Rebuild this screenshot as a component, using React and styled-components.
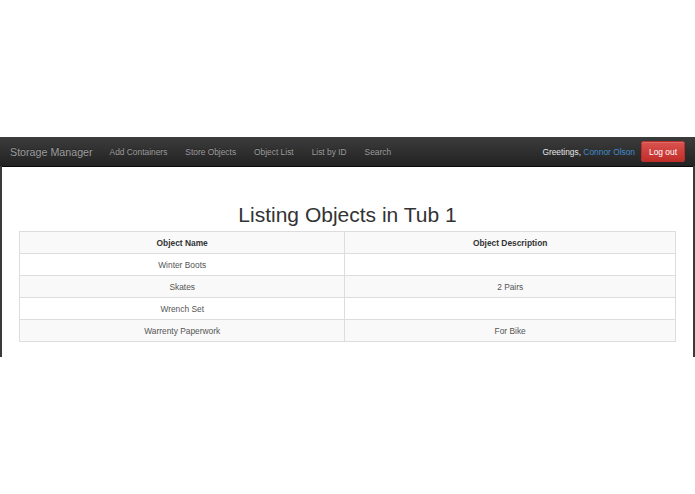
import React from 'react';
import styled, { createGlobalStyle } from 'styled-components';

const GlobalStyle = createGlobalStyle`
  html, body {
    margin: 0;
    padding: 0;
    background: #fff;
    font-family: "Liberation Sans", Arial, sans-serif;
  }
`;

const S = {};

S.Page = styled.div`
  width: 695px;
  height: 494px;
  padding-top: 137px;
  box-sizing: border-box;
  background: #fff;
`;

S.Navbar = styled.nav`
  display: flex;
  align-items: center;
  height: 30px;
  padding: 0 10px;
  background-image: linear-gradient(to bottom, #3c3c3c 0%, #222 100%);
  border-bottom: 1px solid #080808;
  box-sizing: border-box;
`;

S.Brand = styled.a`
  color: #9d9d9d;
  font-size: 10.7px;
  padding-right: 9px;
  text-shadow: 0 -1px 0 rgba(0,0,0,0.25);
`;

S.NavLinks = styled.ul`
  display: flex;
  list-style: none;
  margin: 0;
  padding: 0;
  flex: 1;
`;

S.NavLink = styled.li`
  color: #9d9d9d;
  font-size: 8.4px;
  padding: 0 9px;
  text-shadow: 0 -1px 0 rgba(0,0,0,0.25);

  &:first-child {
    padding-left: 8px;
  }
`;

S.Greeting = styled.span`
  color: #e6e6e6;
  font-size: 8.4px;
  margin-right: 6px;

  a {
    color: #428bca;
  }
`;

S.LogoutButton = styled.button`
  font-family: inherit;
  font-size: 8.4px;
  color: #fff;
  height: 21px;
  padding: 0 7px;
  border: 1px solid #b92c28;
  border-radius: 2.4px;
  background-image: linear-gradient(to bottom, #d9534f 0%, #c12e2a 100%);
  box-shadow: inset 0 1px 0 rgba(255,255,255,0.15);
`;

S.Content = styled.div`
  height: 191px;
  border-left: 2px solid #3a3a3a;
  border-right: 2px solid #3a3a3a;
  padding: 37px 17px 0;
  box-sizing: border-box;
  margin-top: -1px;
`;

S.Heading = styled.h1`
  margin: 0 0 4px;
  font-size: 21px;
  font-weight: 400;
  line-height: 24px;
  color: #333;
  text-align: center;
`;

S.Table = styled.table`
  width: 100%;
  border-collapse: collapse;
  font-size: 8.4px;
  color: #555;

  td {
    border: 1px solid #ddd;
    padding: 0 5px;
    height: 21px;
    line-height: 12px;
    text-align: center;
  }

  td:first-child {
    width: 49.6%;
  }

  tr:nth-of-type(odd) {
    background: #f9f9f9;
  }
`;

S.HeaderCell = styled.td`
  && {
    font-weight: 700;
    color: #333;
  }
`;

const objects = [
  { name: 'Winter Boots', description: '' },
  { name: 'Skates', description: '2 Pairs' },
  { name: 'Wrench Set', description: '' },
  { name: 'Warrenty Paperwork', description: 'For Bike' },
];

export default function App() {
  return (
    <S.Page>
      <GlobalStyle />
      <S.Navbar>
        <S.Brand>Storage Manager</S.Brand>
        <S.NavLinks>
          <S.NavLink>Add Containers</S.NavLink>
          <S.NavLink>Store Objects</S.NavLink>
          <S.NavLink>Object List</S.NavLink>
          <S.NavLink>List by ID</S.NavLink>
          <S.NavLink>Search</S.NavLink>
        </S.NavLinks>
        <S.Greeting>Greetings, <a>Connor Olson</a></S.Greeting>
        <S.LogoutButton>Log out</S.LogoutButton>
      </S.Navbar>
      <S.Content>
        <S.Heading>Listing Objects in Tub 1</S.Heading>
        <S.Table>
          <tbody>
            <tr>
              <S.HeaderCell>Object Name</S.HeaderCell>
              <S.HeaderCell>Object Description</S.HeaderCell>
            </tr>
            {objects.map(o => (
              <tr key={o.name}>
                <td>{o.name}</td>
                <td>{o.description}</td>
              </tr>
            ))}
          </tbody>
        </S.Table>
      </S.Content>
    </S.Page>
  );
}
